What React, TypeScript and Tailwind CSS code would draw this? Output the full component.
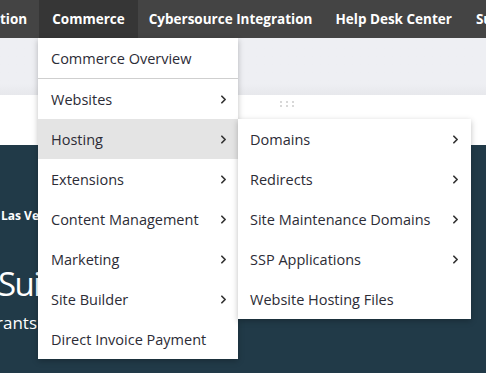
import { ChevronRight } from 'lucide-react'

const mainItems = [
    { label: 'Websites', sub: true },
    { label: 'Hosting', sub: true, active: true },
    { label: 'Extensions', sub: true },
    { label: 'Content Management', sub: true },
    { label: 'Marketing', sub: true },
    { label: 'Site Builder', sub: true },
    { label: 'Direct Invoice Payment', sub: false },
]

const hostingItems = [
    { label: 'Domains', sub: true },
    { label: 'Redirects', sub: true },
    { label: 'Site Maintenance Domains', sub: true },
    { label: 'SSP Applications', sub: true },
    { label: 'Website Hosting Files', sub: false },
]

function Chevron() {
    return <ChevronRight className="w-[13px] h-[13px] text-[#333]" strokeWidth={3.2} />
}

export default function App() {
    return (
        <div className="relative w-[486px] h-[373px] overflow-hidden bg-white font-['Open_Sans',sans-serif]">
            {/* top nav */}
            <nav className="flex h-[38px] bg-[#444444] text-white text-[13.5px] font-bold whitespace-nowrap">
                <div className="flex items-center pr-[12px]">tion</div>
                <div className="flex items-center px-[13px] bg-[#363636]">Commerce</div>
                <div className="flex items-center px-[11px]">Cybersource Integration</div>
                <div className="flex items-center px-[12px]">Help Desk Center</div>
                <div className="flex items-center px-[12px]">Support</div>
            </nav>

            {/* page body */}
            <div className="h-[57px] bg-gradient-to-b from-[#eeeff3] from-80% to-[#e7e8ec]" />
            <div className="h-[50px] bg-white pl-[280px] pt-[6px]">
                <div className="grid grid-cols-3 w-fit gap-x-[4px] gap-y-[2px]">
                    {Array.from({ length: 6 }).map((_, i) => (
                        <span key={i} className="w-[2px] h-[2px] bg-[#d8d8d8]" />
                    ))}
                </div>
            </div>
            <div className="h-[228px] bg-[#213a48] text-white">
                <div className="pt-[65px] text-[12px] font-bold leading-none pl-[1px]">Las Vegas</div>
                <div className="mt-[45px] text-[33px] leading-none -ml-[2px] tracking-[-1.5px]">Suite</div>
                <div className="mt-[14px] text-[17px] leading-none -ml-[4px]">rants</div>
            </div>

            {/* commerce dropdown */}
            <div className="absolute left-[38px] top-[38px] w-[200px] bg-white shadow-[0_2px_6px_rgba(0,0,0,0.25)] text-[14.5px] text-[#2c2c36]">
                <div className="h-[41px] flex items-center px-[13px] pt-[1px] border-b border-[#cfcfcf]">
                    Commerce Overview
                </div>
                {mainItems.map((item) => (
                    <div
                        key={item.label}
                        className={`h-[40px] flex items-center justify-between pl-[13px] pr-[8px] pt-[1px] ${item.active ? 'bg-[#e4e4e4]' : ''}`}
                    >
                        <span>{item.label}</span>
                        {item.sub && <Chevron />}
                    </div>
                ))}
            </div>

            {/* hosting submenu */}
            <div className="absolute left-[238px] top-[119px] w-[233px] bg-white shadow-[0_2px_6px_rgba(0,0,0,0.25)] text-[14.5px] text-[#2c2c36]">
                {hostingItems.map((item) => (
                    <div key={item.label} className="h-[40px] flex items-center justify-between pl-[12px] pr-[9px] pt-[1px]">
                        <span>{item.label}</span>
                        {item.sub && <Chevron />}
                    </div>
                ))}
            </div>
        </div>
    )
}
